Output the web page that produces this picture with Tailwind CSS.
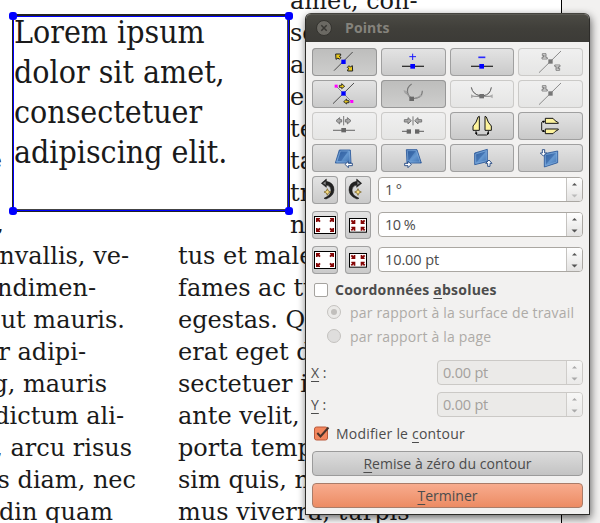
<!DOCTYPE html>
<html lang="fr">
<head>
<meta charset="utf-8">
<title>Points</title>
<script src="https://cdn.jsdelivr.net/npm/@tailwindcss/browser@4"></script>
</head>
<body class="relative w-[600px] h-[523px] overflow-hidden bg-[#f2f1f0]">

<svg class="absolute w-0 h-0" aria-hidden="true">
  <defs>
    <linearGradient id="blue" x1="0" y1="0" x2="1" y2="1"><stop offset="0" stop-color="#3465a4"/><stop offset=".55" stop-color="#6497d0"/><stop offset="1" stop-color="#3b6cab"/></linearGradient>
    <g id="diag"><path d="M66 68L122 12" stroke="#333" stroke-width="2.5"/></g>
    <g id="nw"><path d="M2 2H17V6L13 9L18 13L13 18L9 14L3 18Z" fill="#e8c81a" stroke="#222" stroke-width="3"/></g>
    <g id="gnw"><path d="M2 2H13V14H17V18H1V13H5V8H2ZM6 5V13M10 5V14" fill="none" stroke="#777" stroke-width="2.6"/></g>
    <g id="arr"><path d="M0 0H12V4H9L14 9L10 13L5 8V12H0Z" fill="#850606"/></g>
  </defs>
</svg>

<!-- Document canvas -->
<div class="absolute left-0 top-0 w-[562px] h-[523px] overflow-hidden bg-white border-r border-black text-[#1a1a1a] text-[24px] leading-[32px] whitespace-nowrap font-['DejaVu_Serif',serif]">
  <div class="absolute right-[559px] top-[145px]">e</div>
  <div class="absolute right-[557px] top-[208px]">,</div>
  <div class="absolute left-0 top-[240px] flex flex-col items-start">
    <div class="w-[129px] flex justify-end">nvallis, ve-</div>
    <div class="w-[96px] flex justify-end">ndimen-</div>
    <div class="w-[125px] flex justify-end">ut mauris.</div>
    <div class="w-[86px] flex justify-end">r adipi-</div>
    <div class="w-[107px] flex justify-end">g, mauris</div>
    <div class="w-[124px] flex justify-end">dictum ali-</div>
    <div class="w-[132px] flex justify-end">, arcu risus</div>
    <div class="w-[136px] flex justify-end">s diam, nec</div>
    <div class="w-[113px] flex justify-end">din quam</div>
  </div>
  <div class="absolute left-[178px] top-[240px]">
    <div>tus et male</div>
    <div>fames ac tur</div>
    <div>egestas. Qui</div>
    <div>erat eget do</div>
    <div>sectetuer id</div>
    <div>ante velit, a</div>
    <div>porta tempo</div>
    <div>sim quis, ni</div>
    <div>mus viverra, turpis</div>
  </div>
  <div class="absolute left-[290px] top-[-15px]">
    <div>amet, con-</div>
    <div>se</div>
    <div>a</div>
    <div>e</div>
    <div>te</div>
    <div>ta</div>
    <div>tr</div>
    <div>n</div>
  </div>

  <!-- Selected text frame -->
  <div class="absolute left-[12px] top-[14px] w-[278px] h-[198px] bg-white border border-t-2 border-[#222]">
    <div class="absolute inset-0 border border-[#0000ff]"></div>
    <div class="absolute inset-px border-r border-b border-[#444]"></div>
    <div class="pl-px text-[31.8px] leading-[40px] font-['DejaVu_Serif_Condensed','DejaVu_Serif',serif] [font-stretch:75%]">
      <div class="-mt-[4px]">Lorem ipsum</div><div>dolor sit amet,</div><div>consectetuer</div><div>adipiscing elit.</div>
    </div>
  </div>
  <div class="absolute left-[9px] top-[12px] w-[8px] h-[8px] rounded-[3px] bg-[#0000ff]"></div>
  <div class="absolute left-[285px] top-[12px] w-[8px] h-[8px] rounded-[3px] bg-[#0000ff]"></div>
  <div class="absolute left-[9px] top-[207px] w-[8px] h-[8px] rounded-[3px] bg-[#0000ff]"></div>
  <div class="absolute left-[285px] top-[207px] w-[8px] h-[8px] rounded-[3px] bg-[#0000ff]"></div>
</div>

<!-- Points dialog -->
<div class="absolute left-[305px] top-[13px] w-[285px] h-[502px] flex flex-col rounded-t-[6px] border border-[#2d2c29] border-t-[#45443f] bg-[#f2f1f0] overflow-visible shadow-[1px_3px_9px_rgba(0,0,0,0.6)] text-[15px] text-[#4c4c4c] whitespace-nowrap font-['Open_Sans','Noto_Sans',sans-serif]">
  <div class="h-[28px] shrink-0 flex items-center rounded-t-[5px] bg-linear-to-b from-[#4b4a44] via-[#403f3a] to-[#3c3b37] border-t border-[#5b5a54] pl-[10px]">
    <svg class="w-[16px] h-[16px] -mt-[2px]" viewBox="0 0 16 16"><circle cx="8" cy="8" r="7.5" fill="#6b6963" stroke="#34332f"/><path d="M5.3 5.3L10.7 10.7M10.7 5.3L5.3 10.7" stroke="#383733" stroke-width="1.5"/></svg>
    <div class="ml-[13px] -mt-[2px] font-bold text-[14px] leading-[20px] tracking-[0.1px] text-[#85837c]">Points</div>
  </div>

  <div class="flex flex-col pl-[6px] pr-[6px] pt-[6px]">
    <!-- Node tools -->
    <div class="grid grid-cols-[65px_65px_64px_65px] gap-[4px]">
      <div class="h-[28px] rounded-[4px] bg-linear-to-b from-[#bdbdbc] to-[#cececd] shadow-[inset_0_0_0_1px_#979797]">
        <svg class="w-[65px] h-[28px]" viewBox="0 0 195 84"><use href="#diag"/><rect x="88" y="35" width="13" height="13" fill="#00f"/><use href="#nw" x="69" y="16"/><g transform="translate(124 71) rotate(180)"><use href="#nw"/></g></svg>
      </div>
      <div class="h-[28px] rounded-[4px] bg-linear-to-b from-[#e4e4e4] to-[#c9c9c9] shadow-[inset_0_0_0_1px_#a0a0a0]">
        <svg class="w-[65px] h-[28px]" viewBox="0 0 195 84"><path d="M63 55H129" stroke="#333" stroke-width="4"/><rect x="88" y="48" width="14" height="14" fill="#00f"/><path d="M85 26H105M95 17V36" stroke="#1a1aff" stroke-width="3"/></svg>
      </div>
      <div class="h-[28px] rounded-[4px] bg-linear-to-b from-[#e4e4e4] to-[#c9c9c9] shadow-[inset_0_0_0_1px_#a0a0a0]">
        <svg class="w-[64px] h-[28px]" viewBox="0 0 192 84"><path d="M63 55H129" stroke="#333" stroke-width="4"/><rect x="88" y="48" width="14" height="14" fill="#00f"/><path d="M85 28H106" stroke="#2a2aff" stroke-width="5"/></svg>
      </div>
      <div class="h-[28px] rounded-[4px] bg-linear-to-b from-[#f0f0f0] to-[#e5e5e4] shadow-[inset_0_0_0_1px_#cbcac8]">
        <svg class="w-[65px] h-[28px]" viewBox="0 0 195 84"><path d="M63 74L129 9" stroke="#777" stroke-width="2.5"/><rect x="91" y="34" width="13" height="13" fill="#777"/><use href="#gnw" x="71" y="15"/><g transform="translate(127 69) rotate(180)"><use href="#gnw"/></g></svg>
      </div>

      <div class="h-[28px] rounded-[4px] bg-linear-to-b from-[#e4e4e4] to-[#c9c9c9] shadow-[inset_0_0_0_1px_#a0a0a0]">
        <svg class="w-[65px] h-[28px]" viewBox="0 0 195 84"><path d="M63 71L126 9" stroke="#333" stroke-width="2.5"/><path d="M72 18L119 65" stroke="#777" stroke-width="2.5"/><rect x="88" y="34" width="13" height="13" fill="#00f"/><rect x="68" y="14" width="9" height="9" fill="#f0f"/><rect x="115" y="60" width="9" height="9" fill="#f0f"/><path d="M82 16H89V11L98 19L89 26V22H82ZM111 62H104V57L95 65L104 72V68H111Z" fill="#e8c81a" stroke="#222" stroke-width="2.6"/></svg>
      </div>
      <div class="h-[28px] rounded-[4px] bg-linear-to-b from-[#bdbdbc] to-[#cececd] shadow-[inset_0_0_0_1px_#979797]">
        <svg class="w-[65px] h-[28px]" viewBox="0 0 195 84" fill="none"><path d="M92 12Q76 22 80 39Q83 50 92 55Q124 58 124 32" stroke="#777" stroke-width="3.2"/><path d="M70 33L90 54M101 55L120 49" stroke="#999" stroke-width="3.4"/><path d="M67 31L80 34L73 42ZM115 44L125 45L118 52Z" fill="#a3a3a3"/><rect x="85" y="50" width="14" height="13" fill="#696969"/></svg>
      </div>
      <div class="h-[28px] rounded-[4px] bg-linear-to-b from-[#f0f0f0] to-[#e5e5e4] shadow-[inset_0_0_0_1px_#cbcac8]">
        <svg class="w-[64px] h-[28px]" viewBox="0 0 192 84" fill="none"><path d="M64 22Q68 43 90 47H101Q121 44 124 22" stroke="#555" stroke-width="3"/><path d="M65 49H125" stroke="#888" stroke-width="3"/><path d="M63 43L74 49L63 55ZM128 43L117 49L128 55Z" fill="#aaa"/><rect x="88" y="42" width="14" height="13" fill="#707070"/></svg>
      </div>
      <div class="h-[28px] rounded-[4px] bg-linear-to-b from-[#f0f0f0] to-[#e5e5e4] shadow-[inset_0_0_0_1px_#cbcac8]">
        <svg class="w-[65px] h-[28px]" viewBox="0 0 195 84"><path d="M63 74L129 9" stroke="#777" stroke-width="2.5"/><rect x="91" y="34" width="13" height="13" fill="#777"/><use href="#gnw" x="71" y="15"/></svg>
      </div>

      <div class="h-[28px] rounded-[4px] bg-linear-to-b from-[#f0f0f0] to-[#e5e5e4] shadow-[inset_0_0_0_1px_#cbcac8]">
        <svg class="w-[65px] h-[28px]" viewBox="0 0 195 84"><path d="M63 55H129" stroke="#777" stroke-width="3.5"/><rect x="88" y="48" width="14" height="13" fill="#666"/><path d="M95 12V40M72 26L83 17V23H89V30H83V36ZM117 26L106 17V23H100V30H106V36Z" fill="#aaa" stroke="#777" stroke-width="3"/></svg>
      </div>
      <div class="h-[28px] rounded-[4px] bg-linear-to-b from-[#f0f0f0] to-[#e5e5e4] shadow-[inset_0_0_0_1px_#cbcac8]">
        <svg class="w-[65px] h-[28px]" viewBox="0 0 195 84"><path d="M63 58H84M108 58H129" stroke="#777" stroke-width="3.5"/><rect x="77" y="52" width="13" height="13" fill="#666"/><rect x="102" y="52" width="13" height="13" fill="#666"/><path d="M96 13V40M91 26L81 17V23H70V30H81V36ZM101 26L111 17V23H122V30H111V36Z" fill="#aaa" stroke="#777" stroke-width="3"/></svg>
      </div>
      <div class="h-[28px] rounded-[4px] bg-linear-to-b from-[#e4e4e4] to-[#c9c9c9] shadow-[inset_0_0_0_1px_#a0a0a0]">
        <svg class="w-[64px] h-[28px]" viewBox="0 0 192 84"><path d="M88 13V55H69V42Q80 32 84 15ZM105 13V55H124V42Q113 32 109 15Z" fill="#fdf39d" stroke="#151515" stroke-width="3"/><path d="M78 57V66L82 69H110L115 66V57" fill="none" stroke="#222" stroke-width="3"/><circle cx="79" cy="64" r="3"/><circle cx="114" cy="64" r="3"/></svg>
      </div>
      <div class="h-[28px] rounded-[4px] bg-linear-to-b from-[#e4e4e4] to-[#c9c9c9] shadow-[inset_0_0_0_1px_#a0a0a0]">
        <svg class="w-[65px] h-[28px]" viewBox="0 0 195 84"><path d="M82 34V19H105Q110 27 121 32V34ZM82 51V65H105Q110 58 121 53V51Z" fill="#fdf39d" stroke="#151515" stroke-width="3"/><path d="M81 28H74L71 31V54L74 58H81" fill="none" stroke="#222" stroke-width="3"/><circle cx="76" cy="29" r="3"/><circle cx="76" cy="57" r="3"/></svg>
      </div>

      <div class="h-[28px] rounded-[4px] bg-linear-to-b from-[#e4e4e4] to-[#c9c9c9] shadow-[inset_0_0_0_1px_#a0a0a0]">
        <svg class="w-[65px] h-[28px]" viewBox="0 0 195 84"><path d="M82 18H115L117 57H70Z" fill="url(#blue)" stroke="#2d5a9b" stroke-width="2.6"/><path d="M86 22H108L88 51H77Z" fill="#2b5a9d" fill-opacity=".6"/><path d="M85 21H112L114 54H74Z" fill="none" stroke="#8fb7e2" stroke-width="1.5"/><path d="M99 61L109 52V58H121V65H109V71Z" fill="#fff" stroke="#173f7c" stroke-width="2.6"/></svg>
      </div>
      <div class="h-[28px] rounded-[4px] bg-linear-to-b from-[#e4e4e4] to-[#c9c9c9] shadow-[inset_0_0_0_1px_#a0a0a0]">
        <svg class="w-[65px] h-[28px]" viewBox="0 0 195 84"><path d="M76 17H108L121 57H78Z" fill="url(#blue)" stroke="#2d5a9b" stroke-width="2.6"/><path d="M80 21H104L84 49H80Z" fill="#2b5a9d" fill-opacity=".6"/><path d="M79 20H106L117 54H81Z" fill="none" stroke="#8fb7e2" stroke-width="1.5"/><path d="M91 61L81 52V58H71V65H81V71Z" fill="#fff" stroke="#173f7c" stroke-width="2.6"/></svg>
      </div>
      <div class="h-[28px] rounded-[4px] bg-linear-to-b from-[#e4e4e4] to-[#c9c9c9] shadow-[inset_0_0_0_1px_#a0a0a0]">
        <svg class="w-[64px] h-[28px]" viewBox="0 0 192 84"><path d="M74 27L112 16V53L74 62Z" fill="url(#blue)" stroke="#2d5a9b" stroke-width="2.6"/><path d="M78 31L108 22L79 55Z" fill="#2b5a9d" fill-opacity=".5"/><path d="M77 30L109 20V50L77 58Z" fill="none" stroke="#8fb7e2" stroke-width="1.5"/><path d="M117 48L107 58H113V67H120V58H126Z" fill="#fff" stroke="#173f7c" stroke-width="2.6"/></svg>
      </div>
      <div class="h-[28px] rounded-[4px] bg-linear-to-b from-[#e4e4e4] to-[#c9c9c9] shadow-[inset_0_0_0_1px_#a0a0a0]">
        <svg class="w-[65px] h-[28px]" viewBox="0 0 195 84"><path d="M79 29L119 21V56L79 69Z" fill="url(#blue)" stroke="#2d5a9b" stroke-width="2.6"/><path d="M83 34L113 27L84 61Z" fill="#2b5a9d" fill-opacity=".5"/><path d="M82 32L116 25V54L82 65Z" fill="none" stroke="#8fb7e2" stroke-width="1.5"/><path d="M76 36L67 27H73V17H80V27H86Z" fill="#fff" stroke="#173f7c" stroke-width="2.6"/></svg>
      </div>
    </div>

    <!-- Rotate and scale -->
    <div class="mt-[4px] flex flex-col gap-[7px]">
      <div class="flex h-[28px]">
        <div class="w-[26px] rounded-[4px] bg-linear-to-b from-[#e4e4e4] to-[#c9c9c9] shadow-[inset_0_0_0_1px_#a0a0a0]">
          <svg class="w-[26px] h-[28px]" viewBox="0 0 78 84"><path id="rot" d="M28 22L43 9V16Q66 20 66 42Q65 61 42 69L36 67Q58 57 57 42Q56 29 43 27V34Z" fill="#222" stroke="#111" stroke-width="1.5"/><path d="M33 22L41 16V27Z" fill="#888"/><path d="M46 38L49 45L56 48L49 51L46 58L43 51L36 48L43 45Z" fill="#f7dc82" stroke="#6b5514" stroke-width="2"/></svg>
        </div>
        <div class="ml-[7px] w-[26px] rounded-[4px] bg-linear-to-b from-[#e4e4e4] to-[#c9c9c9] shadow-[inset_0_0_0_1px_#a0a0a0]">
          <svg class="w-[26px] h-[28px]" viewBox="0 0 78 84"><g transform="translate(78 0) scale(-1 1)"><use href="#rot"/><path d="M33 22L41 16V27Z" fill="#888"/></g><path d="M39 38L42 45L49 48L42 51L39 58L36 51L29 48L36 45Z" fill="#f7dc82" stroke="#6b5514" stroke-width="2"/></svg>
        </div>
        <div class="ml-[7px] mt-px w-[205px] h-[25px] flex rounded-[4px] border border-[#aaa7a2] bg-white overflow-hidden">
          <div class="flex-1 pl-[6px] leading-[23px] text-[14.5px] tracking-[-0.6px]">1 °</div>
          <svg class="w-[16px] h-[23px] bg-linear-to-b from-white to-[#e3e2e1] border-l border-[#c5c3c0]" viewBox="0 0 15 23"><path d="M5 7.5L7.5 5L10 7.5Z" fill="#555"/><path d="M4.5 16.5H10.5L7.5 19.5Z" fill="#bbb"/></svg>
        </div>
      </div>
      <div class="flex h-[28px]">
        <div class="w-[26px] rounded-[4px] bg-linear-to-b from-[#e4e4e4] to-[#c9c9c9] shadow-[inset_0_0_0_1px_#a0a0a0]">
          <svg class="w-[26px] h-[28px]" viewBox="0 0 78 84"><g id="grow"><rect x="7.5" y="16.5" width="63" height="51" fill="#fff" stroke="#000" stroke-width="3"/><use href="#arr" x="12" y="21"/><g transform="translate(66 21) scale(-1 1)"><use href="#arr"/></g><g transform="translate(12 63) scale(1 -1)"><use href="#arr"/></g><g transform="translate(66 63) scale(-1 -1)"><use href="#arr"/></g></g></svg>
        </div>
        <div class="ml-[7px] w-[26px] rounded-[4px] bg-linear-to-b from-[#e4e4e4] to-[#c9c9c9] shadow-[inset_0_0_0_1px_#a0a0a0]">
          <svg class="w-[26px] h-[28px]" viewBox="0 0 78 84"><g id="shrink"><rect x="13.5" y="22.5" width="51" height="41" fill="#fff" stroke="#000" stroke-width="3"/><g transform="translate(31 39) scale(-1 -1)"><use href="#arr"/></g><g transform="translate(47 39) scale(1 -1)"><use href="#arr"/></g><g transform="translate(31 47) scale(-1 1)"><use href="#arr"/></g><use href="#arr" x="47" y="47"/></g></svg>
        </div>
        <div class="ml-[7px] mt-px w-[205px] h-[25px] flex rounded-[4px] border border-[#aaa7a2] bg-white overflow-hidden">
          <div class="flex-1 pl-[6px] leading-[23px] text-[14.5px] tracking-[-0.5px]">10 %</div>
          <svg class="w-[16px] h-[23px] bg-linear-to-b from-white to-[#e3e2e1] border-l border-[#c5c3c0]" viewBox="0 0 15 23"><path d="M5 7.5L7.5 5L10 7.5Z" fill="#555"/><path d="M4.5 16.5H10.5L7.5 19.5Z" fill="#555"/></svg>
        </div>
      </div>
      <div class="flex h-[28px]">
        <div class="w-[26px] rounded-[4px] bg-linear-to-b from-[#e4e4e4] to-[#c9c9c9] shadow-[inset_0_0_0_1px_#a0a0a0]">
          <svg class="w-[26px] h-[28px]" viewBox="0 0 78 84"><use href="#grow"/></svg>
        </div>
        <div class="ml-[7px] w-[26px] rounded-[4px] bg-linear-to-b from-[#e4e4e4] to-[#c9c9c9] shadow-[inset_0_0_0_1px_#a0a0a0]">
          <svg class="w-[26px] h-[28px]" viewBox="0 0 78 84"><use href="#shrink"/></svg>
        </div>
        <div class="ml-[7px] mt-px w-[205px] h-[25px] flex rounded-[4px] border border-[#aaa7a2] bg-white overflow-hidden">
          <div class="flex-1 pl-[6px] leading-[23px] text-[14.5px] tracking-[-0.1px]">10.00 pt</div>
          <svg class="w-[16px] h-[23px] bg-linear-to-b from-white to-[#e3e2e1] border-l border-[#c5c3c0]" viewBox="0 0 15 23"><path d="M5 7.5L7.5 5L10 7.5Z" fill="#555"/><path d="M4.5 16.5H10.5L7.5 19.5Z" fill="#555"/></svg>
        </div>
      </div>
    </div>

    <!-- Absolute coordinates -->
    <div class="mt-[5px] h-[21px] flex items-center pl-[2px]">
      <div class="w-[14px] h-[14px] rounded-[2px] border border-[#a5a39f] bg-white"></div>
      <div class="ml-[7px] font-bold text-[14px] tracking-[0.22px]">Coordonnées <span class="underline underline-offset-[3px] decoration-1">a</span>bsolues</div>
    </div>
    <div class="h-[24px] flex items-center pl-[15px] text-[#aeaba7]">
      <div class="w-[14px] h-[14px] rounded-full border border-[#c4c2bf] bg-[#ebeae8] flex items-center justify-center"><div class="w-[6px] h-[6px] rounded-full bg-[#c1bfbc]"></div></div>
      <div class="ml-[9px] text-[14px] tracking-[0.19px]">par rapport à la surface de travail</div>
    </div>
    <div class="h-[24px] flex items-center pl-[15px] text-[#aeaba7]">
      <div class="w-[14px] h-[14px] rounded-full border border-[#c4c2bf] bg-[#dfdedd]"></div>
      <div class="ml-[9px] text-[14px] tracking-[0.19px]">par rapport à la page</div>
    </div>
    <div class="mt-[12px] flex flex-col gap-[7px]">
      <div class="h-[25px] flex items-center justify-between">
        <div class="-ml-px text-[14px]"><span class="underline underline-offset-[3px]">X</span> :</div>
        <div class="w-[146px] h-[25px] flex rounded-[4px] border border-[#cbc9c6] bg-[#ebeae8] overflow-hidden">
          <div class="flex-1 pl-[5px] leading-[23px] text-[14.5px] text-[#a4a19d] tracking-[-0.2px]">0.00 pt</div>
          <svg class="w-[16px] h-[23px] bg-linear-to-b from-[#f7f7f6] to-[#ebeae9] border-l border-[#cfcdca]" viewBox="0 0 15 23"><path d="M5 7.5L7.5 5L10 7.5ZM4.5 16.5H10.5L7.5 19.5Z" fill="#aaa"/></svg>
        </div>
      </div>
      <div class="h-[25px] flex items-center justify-between">
        <div class="-ml-px text-[14px]"><span class="underline underline-offset-[3px]">Y</span> :</div>
        <div class="w-[146px] h-[25px] flex rounded-[4px] border border-[#cbc9c6] bg-[#ebeae8] overflow-hidden">
          <div class="flex-1 pl-[5px] leading-[23px] text-[14.5px] text-[#a4a19d] tracking-[-0.2px]">0.00 pt</div>
          <svg class="w-[16px] h-[23px] bg-linear-to-b from-[#f7f7f6] to-[#ebeae9] border-l border-[#cfcdca]" viewBox="0 0 15 23"><path d="M5 7.5L7.5 5L10 7.5ZM4.5 16.5H10.5L7.5 19.5Z" fill="#aaa"/></svg>
        </div>
      </div>
    </div>
    <div class="mt-[5px] h-[22px] flex items-center pl-[2px]">
      <svg class="w-[16px] h-[15px]" viewBox="0 0 16 15"><rect x=".5" y="1" width="13" height="13" rx="2" fill="#f3865d" stroke="#b9593a"/><path d="M3.3 7L6.5 10.5L14.5 1.5" fill="none" stroke="#48342c" stroke-width="2"/></svg>
      <div class="ml-[6px] text-[14px] tracking-[0.2px]">Modifier le <span class="underline underline-offset-[3px]">c</span>ontour</div>
    </div>
    <div class="mt-[7px] h-[25px] rounded-[4px] border border-[#9b9b9b] bg-linear-to-b from-[#dcdcdc] to-[#c3c3c3] text-center leading-[24px] text-[14px] tracking-[0.05px]"><span class="underline underline-offset-[3px]">R</span>emise à zéro du contour</div>
    <div class="mt-[7px] h-[25px] rounded-[4px] border border-[#a97c69] bg-linear-to-b from-[#f8ac8e] to-[#ec8b63] text-center leading-[24px] text-[14px]"><span class="underline underline-offset-[3px]">T</span>erminer</div>
  </div>
</div>
</body>
</html>
